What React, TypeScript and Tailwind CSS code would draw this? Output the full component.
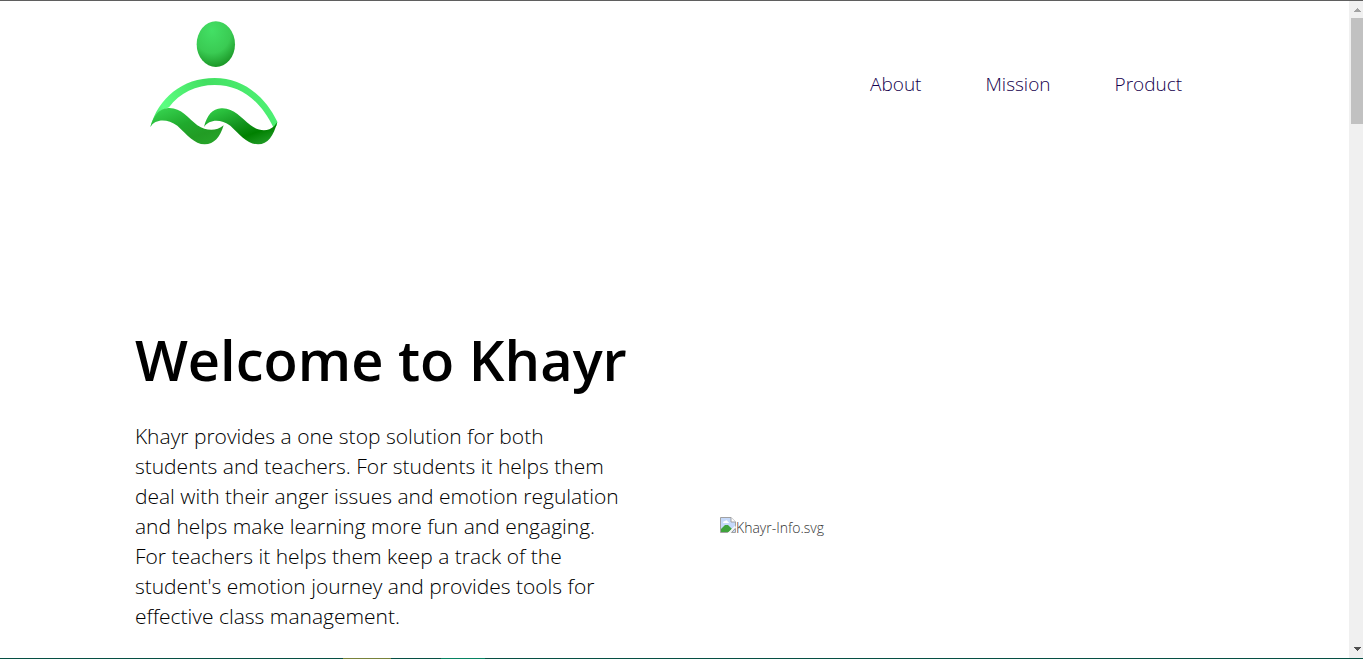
const navigation = ["About", "Mission", "Product"];

const introduction = [
  "Khayr provides a one stop solution for both",
  "students and teachers. For students it helps them",
  "deal with their anger issues and emotion regulation",
  "and helps make learning more fun and engaging.",
  "For teachers it helps them keep a track of the",
  "student's emotion journey and provides tools for",
  "effective class management.",
];

function Logo() {
  return (
    <svg viewBox="0 0 450 435" className="h-[145px] w-[150px]" role="img" aria-label="Khayr">
      <defs>
        <radialGradient id="head" cx="0.4" cy="0.2" r="0.9">
          <stop offset="0" stopColor="#43e065" />
          <stop offset="0.55" stopColor="#3acb53" />
          <stop offset="1" stopColor="#12881a" />
        </radialGradient>
        <linearGradient id="arc" x1="0" y1="1" x2="1" y2="0.8">
          <stop offset="0" stopColor="#3fd45a" />
          <stop offset="0.18" stopColor="#5cff82" />
          <stop offset="0.6" stopColor="#42df61" />
          <stop offset="1" stopColor="#4df073" />
        </linearGradient>
        <linearGradient id="leftWave" x1="0.1" y1="0" x2="0.85" y2="1">
          <stop offset="0" stopColor="#38d551" />
          <stop offset="0.45" stopColor="#20aa2d" />
          <stop offset="0.75" stopColor="#229c24" />
          <stop offset="1" stopColor="#27a52a" />
        </linearGradient>
        <linearGradient id="rightWave" x1="0.1" y1="0" x2="0.85" y2="1">
          <stop offset="0" stopColor="#32cf48" />
          <stop offset="0.45" stopColor="#159521" />
          <stop offset="0.72" stopColor="#008000" />
          <stop offset="1" stopColor="#249e2a" />
        </linearGradient>
      </defs>
      <ellipse cx="227.500" cy="102.500" rx="57.500" ry="68.500" fill="url(#head)" />
      <path
        d="M31 351C55 265 126 204 224 204C306 204 372 254 412 335L410 347L401 354C361 270 301 225 224 225C169 225 118 249 87 292L62 302Z"
        fill="url(#arc)"
      />
      <path
        d="M31 351C42 315 58 295 85 294C122 292 145 324 172 346C200 364 229 364 251 346C240 381 223 403 194 403C163 402 142 375 112 347C82 326 46 326 31 351Z"
        fill="url(#leftWave)"
      />
      <path
        d="M192 351C201 316 217 296 244 295C281 293 303 324 332 346C357 364 384 366 403 348L412 336C400 378 384 403 354 403C321 402 300 374 271 347C242 326 208 327 192 351Z"
        fill="url(#rightWave)"
      />
    </svg>
  );
}

function BrokenImage() {
  return (
    <svg viewBox="0 0 16 16" className="h-4 w-4 shrink-0" aria-hidden="true">
      <path d="M0.500 0.500H11L15.500 5V10L9.500 15.500H0.500Z" fill="#c5d9fa" stroke="#a1a1a1" />
      <path d="M11 0.500V5H15.500" fill="#fff" stroke="#a1a1a1" />
      <path d="M3 6Q3 4 5 4Q7 2 8 5Q9 5 9 6Z" fill="#fff" />
      <path d="M1 14V12L5 8H8L12 12L9.500 15H1Z" fill="#3fa33c" />
      <path d="M7.500 16L15.500 8.500V10L9.500 16Z" fill="#fff" />
      <path d="M11.500 15.500L15.500 11.500V15.500Z" fill="#c5d9fa" stroke="#a1a1a1" />
    </svg>
  );
}

function Scrollbar() {
  return (
    <div className="flex w-[14px] shrink-0 flex-col bg-[#f0f0f0]" aria-hidden="true">
      <div className="flex h-[17px] items-center justify-center pl-[2px]">
        <svg viewBox="0 0 7 4" className="h-1 w-[7px]">
          <path d="M3 0H4V1H5V2H6V3H7V4H0V3H1V2H2V1H3Z" fill="#a3a3a3" />
        </svg>
      </div>
      <div className="ml-[2px] h-[106px] bg-[#c1c1c1]" />
      <div className="mt-auto flex h-[18px] items-center justify-center pl-[2px]">
        <svg viewBox="0 0 7 4" className="h-1 w-[7px]">
          <path d="M0 0H7V1H6V2H5V3H4V4H3V3H2V2H1V1H0Z" fill="#505050" />
        </svg>
      </div>
    </div>
  );
}

export default function App() {
  return (
    <div className="flex min-h-screen flex-col border-t border-[#5f5f5f] bg-white font-['Open_Sans',sans-serif] text-black">
      <div className="flex grow">
        <div className="min-w-0 grow">
          <div className="mx-auto w-4/5">
            <header className="flex items-center justify-between pt-[9px]">
              <a href="#home" className="ml-[5px]">
                <Logo />
              </a>
              <nav className="flex gap-16 pt-[2px] pr-8">
                {navigation.map((label) => (
                  <a key={label} href={`#${label.toLowerCase()}`} className="text-[19px] leading-7 font-light text-[#14004d]">
                    {label}
                  </a>
                ))}
              </nav>
            </header>
            <main className="grid grid-cols-2 items-end gap-[91px] pt-[168px]">
              <section>
                <h1 className="text-[56px] leading-[72px] font-semibold whitespace-nowrap">Welcome to Khayr</h1>
                <p className="pt-[26px] text-[21px] leading-[30px] font-light whitespace-nowrap">
                  {introduction.map((line) => (
                    <span key={line} className="block">
                      {line}
                    </span>
                  ))}
                </p>
              </section>
              <figure className="flex pb-[92px]">
                <BrokenImage />
                <figcaption className="text-sm leading-[22px] font-light text-[#333333]">Khayr-Info.svg</figcaption>
              </figure>
            </main>
          </div>
        </div>
        <Scrollbar />
      </div>
      <div className="flex h-px bg-[#064f43]">
        <div className="ml-[343px] h-px w-12 bg-[#78823a]" />
        <div className="ml-[50px] h-px w-11 bg-[#078362]" />
      </div>
    </div>
  );
}
